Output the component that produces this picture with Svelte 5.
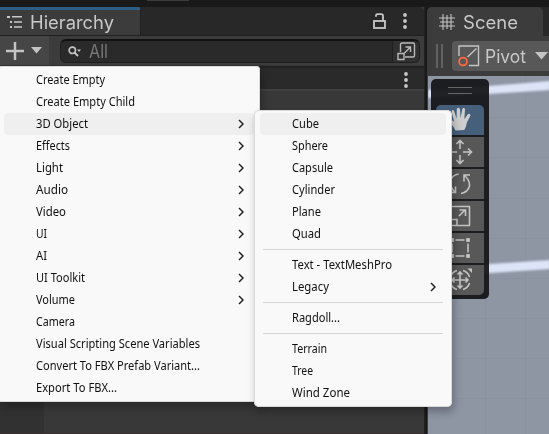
<script>
  const main = [
    ['Create Empty', 69], ['Create Empty Child', 99], ['3D Object', 52, true], ['Effects', 34, true],
    ['Light', 27, true], ['Audio', 32, true], ['Video', 30, true], ['UI', 11, true], ['AI', 11, true],
    ['UI Toolkit', 49, true], ['Volume', 39, true], ['Camera', 39],
    ['Visual Scripting Scene Variables', 164], ['Convert To FBX Prefab Variant...', 164], ['Export To FBX...', 81]
  ];
  const sub = [
    ['Cube', 27], ['Sphere', 36], ['Capsule', 41], ['Cylinder', 43], ['Plane', 29], ['Quad', 29], null,
    ['Text - TextMeshPro', 100], ['Legacy', 37, true], null, ['Ragdoll...', 48], null,
    ['Terrain', 35], ['Tree', 21], ['Wind Zone', 58]
  ];
  // Tightens or loosens a label to its intended width.
  function fit(node, width) {
    const natural = node.getBoundingClientRect().width;
    node.style.transform = `scaleX(${width / natural})`;
  }
</script>

{#snippet menu(items, active)}
  {#each items as item, i}
    {#if item}
      <div class="item" class:active={i === active}>
        <span class="label" use:fit={item[1]}>{item[0]}</span>
        {#if item[2]}
          <svg class="chev" width="6" height="10" viewBox="0 0 6 10"><path d="M1 1l4 4-4 4" /></svg>
        {/if}
      </div>
    {:else}
      <div class="sep"></div>
    {/if}
  {/each}
{/snippet}

{#snippet dots()}
  <svg width="4" height="16" viewBox="0 0 4 16" fill="#c8c8c8"><circle cx="2" cy="2" r="1.9" /><circle cx="2" cy="8" r="1.9" /><circle cx="2" cy="14" r="1.9" /></svg>
{/snippet}

<div class="app">
  <div class="top"><i></i></div>
  <div class="panels">
    <section class="hier">
      <div class="tabs">
        <div class="tab">
          <svg width="16" height="14" viewBox="0 0 16 14" fill="#c8c8c8"><path d="M0 1h3v2H0zM5 1h10v1.4H5zM3 6h2v2H3zM7 6.3h8v1.4H7zM3 11h2v2H3zM7 11.3h8v1.4H7z" /></svg>
          <span class="label" use:fit={84}>Hierarchy</span>
        </div>
        <div class="tabtools">
          <svg width="13" height="17" viewBox="0 0 13 17" fill="none" stroke="#c8c8c8" stroke-width="1.8"><rect x="1" y="8" width="11" height="7" /><path d="M3 3.8V2.500Q3 1.200 4.500 1.200h3.700Q10 1.200 10 3v5" /></svg>
          <div class="tabdots">{@render dots()}</div>
        </div>
      </div>
      <div class="toolbar">
        <div class="add">
          <svg width="18" height="18" viewBox="0 0 18 18"><path d="M9 0v18M0 9h18" stroke="#c4c4c4" stroke-width="2.500" /></svg>
          <svg width="11" height="7" viewBox="0 0 11 7"><path d="M0 0h11L5.500 6.500z" fill="#c4c4c4" /></svg>
        </div>
        <div class="search">
          <svg width="14" height="12" viewBox="0 0 14 12"><circle cx="4.300" cy="4.300" r="3.200" fill="none" stroke="#c4c4c4" stroke-width="1.600" /><path d="M6.500 6.500L10 10" stroke="#c4c4c4" stroke-width="2" /><path d="M9 3.500h4L11 6z" fill="#c4c4c4" /></svg>
          <span class="label" use:fit={19}>All</span>
          <div class="picker"><svg width="19" height="19" viewBox="0 0 19 19" fill="none" stroke="#b8b8b8" stroke-width="1.400"><path d="M3.500 10V2.500Q3.500 1 5 1h11Q17.500 1 17.500 2.500v11Q17.500 15 16 15H8" /><path d="M1 11.500h6v6H1zM7 11.500l6-6M8.500 5H13.500v5" /></svg></div>
        </div>
      </div>
      <div class="scenehead">{@render dots()}</div>
      <div class="tree"><div class="gutter"></div></div>
    </section>

    <section class="scene">
      <div class="stabs"><div class="stab">
        <svg width="16" height="16" viewBox="0 0 16 16"><path d="M4 0v16M8 1v14M12 0v16M0 4h16M1 8h14M0 12h16" stroke="#c4c4c4" stroke-width="1.100" /></svg>
        <span class="label" use:fit={55}>Scene</span>
      </div></div>
      <div class="stools">
        <div class="grip"></div>
        <div class="pivot">
          <svg width="22" height="22" viewBox="0 0 22 22" fill="none" stroke="#c4c4c4" stroke-width="1.400"><path d="M1 11V1h19.500v19.500H11M9.500 12l9-8.500" /><circle cx="5" cy="16.500" r="3.900" stroke="#ff6840" stroke-width="1.800" /></svg>
          <span class="label" use:fit={41}>Pivot</span>
          <svg class="tri" width="13" height="8" viewBox="0 0 13 8"><path d="M0 0h13L6.500 7.500z" fill="#c4c4c4" /></svg>
        </div>
      </div>
      <div class="view">
        <svg class="canvas" width="122" height="358" viewBox="0 0 122 358">
          <path d="M97.500 0v358M57.500 0v358M0 41.500h122M0 81.500h122M0 122.500h122M0 162.500h122M0 202.500h122M0 242.500h122M0 282.500h122M0 322.500h122" stroke="#858e9d" stroke-width=".8" opacity=".55" />
          <g class="streak" fill="#dce4f8">
            <path d="M0 14L60 10 122 5v9L60 18 0 22z" />
            <path d="M0 192l62-4 60-4v9l-60 4-62 3z" />
          </g>
        </svg>
        <div class="palette">
          <div class="handle"></div>
          <div class="tool sel"><svg viewBox="0 0 30 30"><path d="M10.500 25.500Q8.500 21.500 4.800 17.100 3.700 15.500 5.200 14.900 6.500 14.500 9 16.700L6.700 6.700Q6.500 5.200 7.600 5 8.700 4.900 9.100 6.200L11.600 13.500 11.800 4.300Q12 2.800 13.200 2.800 14.500 2.800 15 4.300L15.500 13.100 17.300 4.200Q17.700 2.800 18.800 3.100 20.200 3.400 20 4.700L19.300 14.300 22.800 9.300Q23.900 8.200 24.800 9 25.900 9.800 25.200 11L21.900 17.500Q21 22.500 19.300 25Z" fill="#cecece" /></svg></div>
          <div class="tool"><svg viewBox="0 0 30 30"><path d="M15 3.500V12M15 18v8.500M3.500 15H12M18 15h8.500M11.500 7L15 3.500 18.500 7M11.500 23l3.500 3.500 3.500-3.500M7 11.500L3.500 15 7 18.500M23 11.500l3.500 3.500-3.500 3.500" /></svg></div>
          <div class="tool"><svg viewBox="0 0 30 30"><path d="M13.500 5Q7 6 5.500 12 4.500 17 10 23.500M4.500 23.500h6v-6M16 24.500Q23 23 24.500 17 25 11 19 6M25 6h-6v6.500" /></svg></div>
          <div class="tool"><svg viewBox="0 0 30 30"><path d="M5.500 5.500h19v19h-19zM5.500 18.500H12v6M14 15l6-6M14.500 9H20.500v6" /></svg></div>
          <div class="tool"><svg viewBox="0 0 30 30"><path d="M10.500 7h9M10.500 23h9M7 10.500v9M23 10.500v9" /><path d="M5.500 5.500h3v3h-3zM21.500 5.500h3v3h-3zM5.500 21.500h3v3h-3zM21.500 21.500h3v3h-3z" fill="#c4c4c4" stroke-width=".8" /></svg></div>
          <div class="tool"><svg viewBox="0 0 30 30"><path d="M12 5.500Q7 7 5.500 12M18 5.500Q23 7 24.500 12M12 24.500Q7 23 5.500 18M18 24.500Q23 23 24.500 18M15 7v16M7 15h16M12.500 9.500L15 7l2.500 2.500M12.500 20.500L15 23l2.500-2.500M9.500 12.500L7 15l2.500 2.500M20.500 12.500L23 15l-2.500 2.500" /><path d="M22.500 3.500H27V8z" fill="#c4c4c4" stroke="none" /></svg></div>
        </div>
      </div>
    </section>
  </div>
  <div class="menu first">{@render menu(main, 2)}</div>
  <div class="menu second">{@render menu(sub, 0)}</div>
</div>

<style>
  .app { position: relative; width: 549px; height: 434px; overflow: hidden; background: #191919; font-family: Inter, sans-serif; color: #c8c8c8; display: flex; flex-direction: column; }
  .app :global(*) { box-sizing: border-box; }
  svg { display: block; flex: none; }
  .label { display: inline-block; white-space: pre; transform-origin: left center; }
  .top { height: 7px; padding-left: 147px; }
  .top i { display: block; width: 42px; height: 1px; background: #3c3c3c; }
  .panels { flex: 1; display: flex; gap: 3px; min-height: 0; }
  .hier { width: 425px; display: flex; flex-direction: column; background: #383838; border-right: 1px solid #232323; }
  .tabs { height: 29px; display: flex; justify-content: space-between; background: #282828; border-bottom: 1px solid #202020; border-radius: 0 5px 0 0; }
  .tab { width: 141px; height: 28px; background: #3c3c3c; border-top: 3px solid #2c5d87; border-right: 1px solid #202020; display: flex; align-items: center; padding-left: 7px; gap: 7px; border-radius: 0 3px 0 0; }
  .tab svg { margin-top: -2px; }
  .tab .label { font-size: 18px; line-height: 24px; }
  .tabtools { display: flex; align-items: center; width: 51px; }
  .tabdots { margin-left: 17px; }
  .toolbar { height: 30px; background: #3c3c3c; display: flex; align-items: flex-start; border-bottom: 1px solid #333; }
  .add { width: 49px; height: 29px; padding-left: 6px; display: flex; align-items: center; gap: 7px; background: #464646; }
  .search { margin: 3px 0 0 11px; width: 360px; height: 24px; display: flex; align-items: center; padding-left: 7px; background: #2a2a2a; border: 1px solid #202020; border-top: 2px solid #111; border-radius: 6px; overflow: hidden; }
  .search .label { color: #777; font-size: 18px; line-height: 20px; margin-left: 7px; }
  .picker { margin-left: auto; width: 27px; height: 22px; display: flex; align-items: center; justify-content: center; background: #303030; border-left: 1px solid #202020; }
  .scenehead { height: 25px; padding: 4px 16px 0 0; display: flex; justify-content: flex-end; background: #2a2a2a; border-top: 2px solid #222; border-bottom: 2px solid #404040; }
  .tree { flex: 1; border-bottom: 1px solid #392e30; display: flex; }
  .gutter { width: 44px; background: #313131; }
  .scene { flex: 1; display: flex; flex-direction: column; margin-left: -1px; background: #3c3c3c; border-radius: 5px 0 0; }
  .stabs { height: 29px; background: #282828; border-radius: 5px 0 0; }
  .stab { width: 116px; height: 29px; background: #3c3c3c; border-radius: 5px 5px 0 0; display: flex; align-items: center; gap: 8px; padding-left: 12px; }
  .stab .label { font-size: 18px; line-height: 25px; padding-top: 2px; }
  .stools { height: 40px; display: flex; align-items: center; padding-left: 9px; }
  .grip { width: 7px; height: 24px; border: solid #626262; border-width: 0 2px; }
  .pivot { margin-left: 9px; width: 97px; height: 30px; background: #585858; border-radius: 4px 0 0 4px; display: flex; align-items: center; padding-left: 6px; }
  .pivot .label { font-size: 18px; margin-left: 5px; }
  .tri { margin-left: auto; margin-right: 1px; }
  .view { flex: 1; background: #8e96a4; position: relative; margin-left: 1px; }
  .canvas { position: absolute; left: 0; top: 0; }
  .streak { filter: blur(.9px); }
  .palette { position: absolute; left: 3px; top: 3px; width: 58px; height: 220px; padding: 0 5px; background: rgba(20, 21, 24, .94); border-radius: 5px; display: flex; flex-direction: column; gap: 2px; }
  .handle { flex: none; margin: 8px auto 7px; width: 24px; height: 7px; border: solid #666; border-width: 1px 0; }
  .palette .tool:nth-child(2) { margin-top: 2px; }
  .tool { flex: none; height: 30px; width: 48px; background: #585858; display: flex; justify-content: center; }
  .tool:last-child { border-radius: 0 0 5px 5px; }
  .tool svg { width: 30px; height: 30px; fill: none; stroke: #c4c4c4; stroke-width: 1.6; }
  .tool.sel { background: #46607c; border-radius: 5px 5px 0 0; }
  .tool.sel svg { stroke: none; }
  .menu { position: absolute; background: #f9f9f9; color: #111; font: 12px/22px "Noto Sans", sans-serif; box-shadow: 0 0 0 1px #d9d9d9 inset, 2px 5px 9px rgba(0, 0, 0, .27); border-radius: 4px; }
  .first { left: -2px; top: 66px; width: 262px; height: 336px; padding: 3px 6px; }
  .second { left: 254px; top: 110px; width: 198px; height: 297px; padding: 3px 6px; border-radius: 5px; }
  .item { height: 22px; padding: 0 10px 0 32px; display: flex; align-items: center; justify-content: space-between; border-radius: 4px; }
  .active { background: #efefef; }
  .chev { fill: none; stroke: #222; stroke-width: 1.5; }
  .sep { height: 1px; margin: 4px 3px; background: #d5d5d5; }
</style>
